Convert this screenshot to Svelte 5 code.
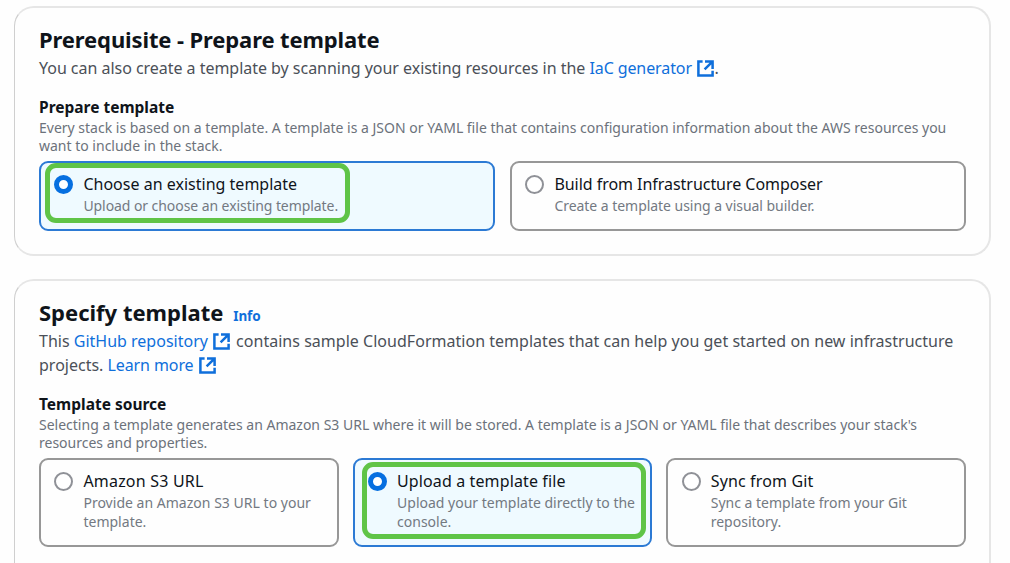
<script>
  const prepare = [
    { title: 'Choose an existing template', lines: ['Upload or choose an existing template.'], selected: true, mark: 'first', ts: 0.01, ds: -0.07 },
    { title: 'Build from Infrastructure Composer', lines: ['Create a template using a visual builder.'], ts: -0.04, ds: -0.04 }
  ];
  const sources = [
    { title: 'Amazon S3 URL', lines: ['Provide an Amazon S3 URL to your', 'template.'], ts: 0.2, ds: 0.02 },
    { title: 'Upload a template file', lines: ['Upload your template directly to the', 'console.'], selected: true, mark: 'second', ts: 0.12, ds: 0 },
    { title: 'Sync from Git', lines: ['Sync a template from your Git', 'repository.'], ts: 0.14, ds: 0 }
  ];
</script>

{#snippet external()}
  <svg class="ext" viewBox="0 0 17 17" aria-hidden="true">
    <path d="M5.6 1.4H1.4V15.6H15.6V10.8M8 1.4H15.6V9M15.2 1.8L7.6 9.4" />
  </svg>
{/snippet}

{#snippet tiles(items)}
  <div class="tiles" class:three={items.length === 3}>
    {#each items as item}
      <div class="tile" class:selected={item.selected}>
        <span class="radio"></span>
        <div class="copy">
          <div class="title" style="letter-spacing:{item.ts}px">{item.title}</div>
          <div class="text" style="letter-spacing:{item.ds}px">
            {#each item.lines as line}<div>{line}</div>{/each}
          </div>
        </div>
        {#if item.mark}<span class="mark {item.mark}"></span>{/if}
      </div>
    {/each}
  </div>
{/snippet}

<main>
  <section>
    <h2 class="tight">Prerequisite - Prepare template</h2>
    <p class="lead"><span class="l1">You can also create a template by scanning your existing resources in the</span> <a class="l2">IaC generator</a>{@render external()}.</p>
    <h3>Prepare template</h3>
    <p class="desc">Every stack is based on a template. A template is a JSON or YAML file that contains configuration information about the AWS resources you<br />want to include in the stack.</p>
    {@render tiles(prepare)}
  </section>

  <section class="specify">
    <h2>Specify template<a class="info">Info</a></h2>
    <p class="lead">This <a>GitHub repository</a>{@render external()} <span class="l3">contains sample CloudFormation templates that can help you get started on new infrastructure</span><br />projects. <a class="l2">Learn more</a>{@render external()}</p>
    <h3>Template source</h3>
    <p class="desc">Selecting a template generates an Amazon S3 URL where it will be stored. A template is a JSON or YAML file that describes your stack's<br />resources and properties.</p>
    {@render tiles(sources)}
  </section>
</main>

<style>
  :global(body) { background: #fefefe; overflow: hidden; }
  main {
    box-sizing: border-box;
    height: 563px;
    overflow: hidden;
    padding: 6px 19px 0 14px;
    font-family: 'Noto Sans', 'Open Sans', sans-serif;
    color: #0f141a;
  }
  section {
    box-sizing: border-box;
    height: 250px;
    border: 2px solid #e6e6e6;
    border-left: 1px solid #cfcfcf;
    border-radius: 20px;
    padding: 17px 23px 0 24px;
    white-space: nowrap;
  }
  .specify { height: 310px; margin-top: 23px; }
  h2 { height: 28px; margin: 0; font-size: 22px; line-height: 28px; font-weight: 700; }
  .tight { letter-spacing: -0.12px; }
  .info { margin-left: 10px; font-size: 13.5px; letter-spacing: -0.15px; }
  a { color: #0f6fdb; }
  .lead { margin: 3px 0 0; font-size: 16px; line-height: 24px; color: #4b5058; }
  .l1 { letter-spacing: -0.03px; }
  .l2 { letter-spacing: -0.1px; }
  .l3 { margin-left: 1.5px; letter-spacing: 0.025px; }
  .ext {
    width: 17px;
    height: 17px;
    margin-left: 5.5px;
    vertical-align: -3px;
    fill: none;
    stroke: #0f6fdb;
    stroke-width: 2.5;
  }
  h3 { margin: 16px 0 0; font-size: 15.5px; line-height: 22px; font-weight: 700; }
  .desc { margin: 1px 0 0; font-size: 14px; line-height: 18px; color: #6c727b; }
  .tiles { display: grid; grid-template-columns: 1fr 1fr; gap: 15px; margin-top: 6px; }
  .three { grid-template-columns: repeat(3, 1fr); gap: 14px; }
  .tile {
    position: relative;
    box-sizing: border-box;
    height: 70px;
    display: flex;
    gap: 10px;
    padding: 9px 13.4px;
    border: 2px solid #979797;
    border-radius: 9px;
  }
  .three .tile { height: 89px; }
  .tile.selected { border-color: #2c7ad4; background: #effaff; }
  .radio {
    box-sizing: border-box;
    flex: none;
    width: 19px;
    height: 19px;
    margin-top: 3px;
    border: 2px solid #8f9197;
    border-radius: 50%;
    background: #fff;
  }
  .selected .radio { border: 5px solid #066fe0; }
  .title { font-size: 16px; line-height: 24px; }
  .text { font-size: 14px; line-height: 19px; color: #737982; }
  .mark {
    position: absolute;
    box-sizing: border-box;
    border: 5px solid #5fc447;
    border-radius: 11px;
  }
  .first { left: 4px; top: 0; width: 305px; height: 60px; }
  .second { left: 7px; top: 2px; width: 284px; height: 77px; }
</style>
